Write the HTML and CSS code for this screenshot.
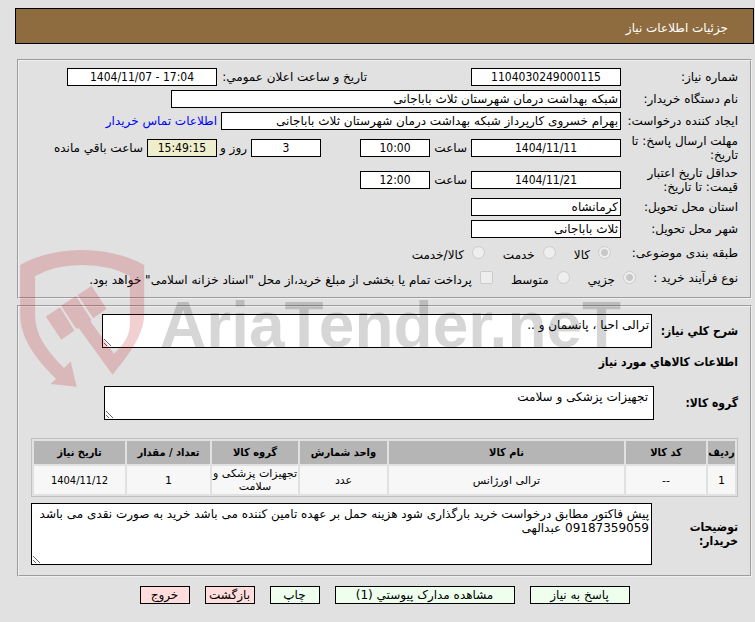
FILE: index.html
```html
<!DOCTYPE html>
<html lang="fa" dir="rtl">
<head>
  <meta charset="UTF-8">
  <meta name="viewport" content="width=device-width, initial-scale=1.0">
  <title>جزئیات اطلاعات نیاز</title>
  <link rel="stylesheet" href="styles.css">
</head>
<body>
  <div class="page">
    <header class="title-bar">جزئیات اطلاعات نیاز</header>

    <form>
      <fieldset class="need-info">
        <div class="row">
          <label class="name" for="needNo">شماره نیاز:</label>
          <input type="text" class="center" id="needNo" value="1104030249000115" readonly>
          <label class="announce" for="announceDate">تاریخ و ساعت اعلان عمومي:</label>
          <input type="text" class="center" id="announceDate" value="1404/11/07 - 17:04" dir="ltr" readonly>
        </div>
        <div class="row">
          <label class="name" for="buyer">نام دستگاه خریدار:</label>
          <input type="text" class="wide" id="buyer" value="شبکه بهداشت درمان شهرستان ثلاث باباجانی" readonly>
        </div>
        <div class="row">
          <label class="name" for="creator">ایجاد کننده درخواست:</label>
          <input type="text" class="medium" id="creator" value="بهرام خسروی کارپرداز شبکه بهداشت درمان شهرستان ثلاث باباجانی" readonly>
          <a class="contact" href="#">اطلاعات تماس خریدار</a>
        </div>
        <div class="row tall">
          <label class="name" for="replyDate">مهلت ارسال پاسخ: تا تاریخ:</label>
          <input type="text" class="center" id="replyDate" value="1404/11/11" dir="ltr" readonly>
          <label class="hour" for="replyHour">ساعت</label>
          <input type="text" class="center short" id="replyHour" value="10:00" readonly>
          <input type="text" class="center short days" id="daysLeft" value="3" aria-label="روز" readonly>
          <label class="and" for="daysLeft">روز و</label>
          <input type="text" class="center short timer" id="timeLeft" value="15:49:15" readonly>
          <label class="left-over" for="timeLeft">ساعت باقي مانده</label>
        </div>
        <div class="row tall">
          <label class="name" for="validDate">حداقل تاریخ اعتبار قیمت: تا تاریخ:</label>
          <input type="text" class="center" id="validDate" value="1404/11/21" dir="ltr" readonly>
          <label class="hour" for="validHour">ساعت</label>
          <input type="text" class="center short" id="validHour" value="12:00" readonly>
        </div>
        <div class="row">
          <label class="name" for="province">استان محل تحویل:</label>
          <input type="text" id="province" value="کرمانشاه" readonly>
        </div>
        <div class="row">
          <label class="name" for="city">شهر محل تحویل:</label>
          <input type="text" id="city" value="ثلاث باباجانی" readonly>
        </div>
        <div class="row options">
          <span class="name category">طبقه بندی موضوعی:</span>
          <input type="radio" name="category" id="goods" checked disabled>
          <label for="goods">کالا</label>
          <input type="radio" name="category" id="service" disabled>
          <label for="service">خدمت</label>
          <input type="radio" name="category" id="both" disabled>
          <label for="both">کالا/خدمت</label>
        </div>
        <div class="row options">
          <span class="name process">نوع فرآیند خرید :</span>
          <input type="radio" name="process" id="minor" checked disabled>
          <label for="minor">جزیي</label>
          <input type="radio" name="process" id="middle" disabled>
          <label for="middle">متوسط</label>
          <input type="checkbox" id="treasury" disabled>
          <label for="treasury">پرداخت تمام یا بخشی از مبلغ خرید،از محل "اسناد خزانه اسلامی" خواهد بود.</label>
        </div>
      </fieldset>

      <fieldset class="goods-info">
        <div class="text-row">
          <label for="summary">شرح کلي نیاز:</label>
          <textarea id="summary" readonly>ترالی احیا ، پانسمان و ..</textarea>
        </div>
        <h2>اطلاعات کالاهاي مورد نیاز</h2>
        <div class="text-row group-row">
          <label for="group">گروه کالا:</label>
          <textarea id="group" readonly>تجهیزات پزشکی و سلامت</textarea>
        </div>
        <table>
          <thead>
            <tr>
              <th class="col-row">ردیف</th>
              <th class="col-code">کد کالا</th>
              <th>نام کالا</th>
              <th class="col-unit">واحد شمارش</th>
              <th class="col-group">گروه کالا</th>
              <th class="col-count">تعداد / مقدار</th>
              <th class="col-date">تاریخ نیاز</th>
            </tr>
          </thead>
          <tbody>
            <tr>
              <td>1</td>
              <td>--</td>
              <td>ترالی اورژانس</td>
              <td>عدد</td>
              <td>تجهیزات پزشکی و سلامت</td>
              <td>1</td>
              <td class="date" dir="ltr">1404/11/12</td>
            </tr>
          </tbody>
        </table>
        <div class="text-row">
          <label for="notes">توضیحات خریدار:</label>
          <textarea class="notes" id="notes" readonly>پیش فاکتور مطابق درخواست خرید بارگذاری شود هزینه حمل بر عهده تامین کننده می باشد خرید به صورت نقدی می باشد 09187359059 عبدالهی</textarea>
        </div>
      </fieldset>

      <div class="buttons">
        <button type="button" class="reply">پاسخ به نیاز</button>
        <button type="button" class="docs">مشاهده مدارک پیوستي (1)</button>
        <button type="button">چاپ</button>
        <button type="button" class="leave">بازگشت</button>
        <button type="button" class="leave">خروج</button>
      </div>
    </form>

    <div class="watermark" dir="ltr" aria-hidden="true">
      <svg viewBox="60 180 375 412" width="125" height="137">
        <path d="M60 225Q140 180 247 180Q350 180 433 225V370C433 435 390 490 338 555L237 416L228 416L183 348L228 318L273 388L272 396L342 492C370 465 390 440 390 400V258Q330 225 247 225Q165 225 105 258V370C105 440 140 480 192 535L212 515L230 591L152 583L168 567C110 510 60 450 60 370Z"/>
        <path d="M137 380L180 352L223 422L184 450ZM233 315L275 288L320 357L280 385Z"/>
      </svg>
      <span>AriaTender.neT</span>
    </div>
  </div>
</body>
</html>
```
FILE: styles.css
```css
:root {
  --page-color: #e1e1e1;
  --title-color: #8f6c40;
  --head-color: #b5b5b5;
  --cell-color: #f7f7f7;
  --ok-color: #eeffee;
  --leave-color: #ffdddd;
  --narrow-font: Tahoma, "DejaVu Sans Condensed", "DejaVu Sans", sans-serif;
}

* {
  box-sizing: border-box;
}

body {
  margin: 0;
  background-color: var(--page-color);
  color: #000;
  font-family: Tahoma, "DejaVu Sans", sans-serif;
  font-size: 12px;
  line-height: 14px;
}

.page {
  position: relative;
  padding: 8px 1px 16px 15px;
}

.title-bar {
  height: 36px;
  padding: 12px 25px 0;
  border: 1px solid #000;
  background-color: var(--title-color);
  color: #fff;
}

fieldset {
  min-width: 0;
  margin: 0 2px;
  border: 2px groove #f0f0f0;
}

.need-info {
  margin-top: 15px;
  padding: 5px 12px 7px;
}

.row {
  display: flex;
  align-items: center;
  height: 22px;
  white-space: nowrap;
}

.row.tall {
  height: 32px;
}

.row.options {
  height: 25px;
}

.name {
  flex: none;
  width: 117px;
}

.tall .name {
  white-space: normal;
}

.name.category {
  width: 127px;
}

.name.process {
  width: 102px;
}

input,
textarea,
button {
  font: inherit;
  color: inherit;
  border: 1px solid #000;
  border-radius: 0;
}

input[type="text"] {
  flex: none;
  width: 150px;
  height: 18px;
  padding: 1px 2px;
  background-color: #fff;
}

input.center {
  font-family: var(--narrow-font);
  text-align: center;
}

input.wide {
  width: 450px;
}

input.medium {
  width: 400px;
}

input.short {
  width: 70px;
}

input.timer {
  background-color: #eeeecc;
}

.announce {
  width: 150px;
  margin-right: 104px;
}

.contact {
  margin-right: 4px;
  color: #0000ff;
  text-decoration: none;
}

.hour {
  width: 41px;
  padding-right: 4px;
}

.days {
  margin-right: 39px;
}

.and {
  width: 34px;
  padding-right: 4px;
}

.left-over {
  padding-right: 4px;
}

.options input {
  appearance: none;
  flex: none;
  width: 13px;
  height: 13px;
  margin: 0;
  border: 1px solid #cbcbcb;
  background-color: #eee;
}

.options input[type="radio"] {
  border-radius: 50%;
}

.options input[type="radio"]:checked {
  background-image: radial-gradient(circle, #c8c8c8 3px, #eee 4px);
}

.options input[type="checkbox"] {
  border-radius: 2px;
}

.options label {
  margin: 4px 8px 0 18px;
}

.goods-info {
  margin-top: 6px;
  padding: 7px 12px 10px 12px;
}

.text-row {
  display: flex;
  align-items: center;
}

.text-row label {
  flex: none;
  width: 86px;
}

.text-row label,
h2 {
  font-family: var(--narrow-font);
  font-size: 12px;
  font-weight: bold;
}

h2 {
  margin: 7px 0 17px;
}

textarea {
  display: block;
  width: 550px;
  height: 34px;
  padding: 3px 2px;
  background-color: #fff;
}

.group-row label {
  width: 84px;
}

.group-row textarea {
  padding-right: 5px;
}

textarea.notes {
  flex: 1;
  height: 62px;
}

table {
  width: 100%;
  margin: 18px 0 6px;
  table-layout: fixed;
  border: 1px solid #c0c0c0;
  border-spacing: 2px;
  font-size: 11px;
  line-height: 13px;
  text-align: center;
}

th,
td {
  padding: 0;
}

th {
  height: 23px;
  background-color: var(--head-color);
  font-family: var(--narrow-font);
  white-space: nowrap;
}

td {
  height: 28px;
  background-color: var(--cell-color);
}

td.date {
  font-family: var(--narrow-font);
}

.col-row {
  width: 27px;
}

.col-code {
  width: 80px;
}

.col-unit {
  width: 87px;
}

.col-group {
  width: 86px;
}

.col-count {
  width: 83px;
}

.col-date {
  width: 91px;
}

.buttons {
  display: flex;
  justify-content: center;
  gap: 15px;
  margin-top: 9px;
}

button {
  width: 50px;
  height: 18px;
  padding: 0;
  background-color: var(--ok-color);
  white-space: nowrap;
  cursor: pointer;
}

button.reply {
  width: 100px;
}

button.docs {
  width: 180px;
}

button.leave {
  background-color: var(--leave-color);
}

/* logo laid over the form */
.watermark {
  position: absolute;
  top: 250px;
  left: 20px;
  display: flex;
  gap: 15px;
  pointer-events: none;
}

.watermark svg {
  fill: rgba(190, 20, 30, 0.2);
}

.watermark span {
  padding-top: 43px;
  color: rgba(0, 0, 0, 0.16);
  font-family: "Liberation Sans", sans-serif;
  font-size: 64px;
  font-weight: bold;
  line-height: 64px;
}
```
